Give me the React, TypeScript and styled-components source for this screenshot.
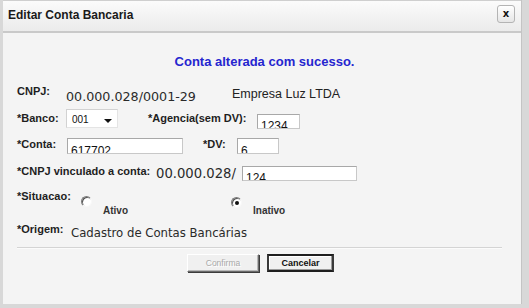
import React from "react";
import styled, { createGlobalStyle } from "styled-components";

const GlobalStyle = createGlobalStyle`
  html, body { margin: 0; padding: 0; }
  body { background: #d8d8d8; width: 529px; height: 308px; overflow: hidden; }
`;

const Dialog = styled.div`
  margin-left: 3px;
  width: 518px;
  height: 304px;
  background: #f4f4f4;
  border-right: 1px solid #c4c4c4;
  display: flex;
  flex-direction: column;
`;

const TitleBar = styled.div`
  height: 30px;
  border-top: 1px solid #cfcfcf;
  border-bottom: 2px solid #c9c9c9;
  background: linear-gradient(#fbfbfb, #ebebeb);
  display: flex;
  justify-content: space-between;
  align-items: flex-start;
  padding: 0 6px 0 5px;
`;

const Title = styled.span`
  margin-top: 7px;
  font: bold 12px/14px "Liberation Sans", Arial, sans-serif;
  color: #1a1a1a;
`;

const CloseButton = styled.button`
  margin-top: 4px;
  width: 18px;
  height: 18px;
  padding: 0;
  border: 1px solid #b4b4b4;
  border-radius: 3px;
  background: linear-gradient(#ffffff, #e6e6e6);
  font: bold 10px/14px "DejaVu Sans", sans-serif;
  color: #111;
  display: flex;
  align-items: center;
  justify-content: center;
`;

const Body = styled.div`
  padding-left: 14px;
  display: flex;
  flex-direction: column;
`;

const Message = styled.div`
  margin-top: 21px;
  width: 485px;
  text-align: center;
  padding-left: 10px;
  box-sizing: border-box;
  font: bold 13px/16px "Liberation Sans", Arial, sans-serif;
  color: #2525cf;
`;

const Row = styled.div<{ $h: number; $mt?: number }>`
  display: flex;
  align-items: flex-start;
  height: ${(p) => p.$h}px;
  margin-top: ${(p) => p.$mt ?? 0}px;
`;

const Label = styled.span<{ $w: number; $top?: number; $ml?: number }>`
  flex: none;
  width: ${(p) => p.$w}px;
  margin-top: ${(p) => p.$top ?? 0}px;
  margin-left: ${(p) => p.$ml ?? 0}px;
  font: bold 11px/13px "Liberation Sans", Arial, sans-serif;
  color: #1e1e1e;
  white-space: nowrap;
`;

const Value = styled.span<{ $w?: number; $top?: number; $size?: number }>`
  flex: none;
  ${(p) => (p.$w ? `width: ${p.$w}px;` : "")}
  margin-top: ${(p) => p.$top ?? 0}px;
  font-family: "DejaVu Sans", Verdana, sans-serif;
  font-size: ${(p) => p.$size ?? 13.2}px;
  line-height: 16px;
  color: #2a2a2a;
  white-space: nowrap;
`;

const PlainValue = styled.span<{ $top?: number }>`
  margin-top: ${(p) => p.$top ?? 0}px;
  font: 12.5px/15px "Liberation Sans", Arial, sans-serif;
  color: #222;
  white-space: nowrap;
`;

const Select = styled.div`
  flex: none;
  width: 52px;
  height: 19px;
  box-sizing: border-box;
  background: #fff;
  border: 1px solid #d2d2d2;
  border-right-color: #e4e4e4;
  border-bottom-color: #e4e4e4;
  display: flex;
  align-items: center;
  justify-content: space-between;
  padding: 3px 5px 0 5px;
  font: 10px/12px "Liberation Sans", Arial, sans-serif;
  color: #111;
`;

const Arrow = styled.span`
  width: 0;
  height: 0;
  border-left: 4px solid transparent;
  border-right: 4px solid transparent;
  border-top: 4px solid #111;
  margin-top: 2px;
`;

const TextBox = styled.div<{ $w: number; $h: number; $top?: number; $pt: number; $ml?: number }>`
  flex: none;
  width: ${(p) => p.$w}px;
  height: ${(p) => p.$h}px;
  margin-top: ${(p) => p.$top ?? 0}px;
  margin-left: ${(p) => p.$ml ?? 0}px;
  box-sizing: border-box;
  overflow: hidden;
  background: #fff;
  border: 1px solid #a8a8a8;
  border-right-color: #c8c8c8;
  border-bottom-color: #c8c8c8;
  padding: ${(p) => p.$pt}px 0 0 3px;
  font: 12px/14px "Liberation Sans", Arial, sans-serif;
  color: #111;
`;

const Option = styled.label<{ $w?: number }>`
  flex: none;
  ${(p) => (p.$w ? `width: ${p.$w}px;` : "")}
  display: flex;
  align-items: flex-start;
  gap: 11px;
`;

const Radio = styled.span<{ $checked?: boolean; $top: number }>`
  position: relative;
  flex: none;
  width: 11px;
  height: 11px;
  margin-top: ${(p) => p.$top}px;
  box-sizing: border-box;
  border-radius: 50%;
  border: 1px solid;
  border-color: #7a7a7a #f8f8f8 #f8f8f8 #7a7a7a;
  background: #fff;
  box-shadow: inset 1px 1px 0 #555;
  &::after {
    content: "";
    display: ${(p) => (p.$checked ? "block" : "none")};
    position: absolute;
    left: 3px;
    top: 3px;
    width: 4px;
    height: 4px;
    border-radius: 50%;
    background: #111;
  }
`;

const OptionText = styled.span<{ $top: number }>`
  margin-top: ${(p) => p.$top}px;
  font: bold 10px/12px "Liberation Sans", Arial, sans-serif;
  color: #333;
`;

const Separator = styled.div`
  margin-top: 1px;
  width: 485px;
  height: 1px;
  background: #d4d4d4;
  border-bottom: 1px solid #fbfbfb;
`;

const ButtonRow = styled.div`
  margin-top: 5px;
  width: 485px;
  display: flex;
  justify-content: center;
  gap: 8px;
  padding-left: 2px;
  box-sizing: border-box;
`;

const Button = styled.button<{ $w: number; $primary?: boolean }>`
  width: ${(p) => p.$w}px;
  height: 18px;
  padding: 0;
  box-sizing: border-box;
  background: #f0f0f0;
  border: ${(p) => (p.$primary ? "2px solid #1e1e1e" : "1px solid")};
  border-color: ${(p) => (p.$primary ? "#1e1e1e #3a3a3a #1e1e1e #3a3a3a" : "#ffffff #6a6a6a #6a6a6a #ffffff")};
  box-shadow: ${(p) => (p.$primary ? "inset -1px -1px 0 #9a9a9a, inset 1px 1px 0 #fff" : "1px 1px 0 #3c3c3c, inset -1px -1px 0 #b8b8b8")};
  font-family: "Liberation Sans", Arial, sans-serif;
  font-size: ${(p) => (p.$primary ? 9 : 8.5)}px;
  font-weight: ${(p) => (p.$primary ? "bold" : "normal")};
  color: ${(p) => (p.$primary ? "#111" : "#a8a8a8")};
  text-shadow: ${(p) => (p.$primary ? "none" : "1px 1px 0 #fff")};
`;

export default function App() {
  return (
    <>
      <GlobalStyle />
      <Dialog>
        <TitleBar>
          <Title>Editar Conta Bancaria</Title>
          <CloseButton aria-label="Fechar">x</CloseButton>
        </TitleBar>
        <Body>
          <Message>Conta alterada com sucesso.</Message>

          <Row $h={25} $mt={14}>
            <Label $w={49} $top={1}>CNPJ:</Label>
            <Value $w={166} $top={5} $size={12.7}>00.000.028/0001-29</Value>
            <PlainValue $top={3}>Empresa Luz LTDA</PlainValue>
          </Row>

          <Row $h={28}>
            <Label $w={49} $top={3}>*Banco:</Label>
            <Select>
              001
              <Arrow />
            </Select>
            <Label $w={109} $ml={30} $top={3}>*Agencia(sem DV):</Label>
            <TextBox $w={43} $h={15} $top={5} $pt={4}>1234</TextBox>
          </Row>

          <Row $h={28}>
            <Label $w={50} $top={1}>*Conta:</Label>
            <TextBox $w={116} $h={16} $top={1} $pt={5}>617702</TextBox>
            <Label $w={34} $ml={20} $top={1}>*DV:</Label>
            <TextBox $w={42} $h={16} $top={1} $pt={5}>6</TextBox>
          </Row>

          <Row $h={25}>
            <Label $w={139}>*CNPJ vinculado a conta:</Label>
            <Value $w={86} $top={1}>00.000.028/</Value>
            <TextBox $w={115} $h={15} $top={1} $pt={4}>124</TextBox>
          </Row>

          <Row $h={32}>
            <Label $w={64}>*Situacao:</Label>
            <Option $w={150}>
              <Radio $top={6} />
              <OptionText $top={15}>Ativo</OptionText>
            </Option>
            <Option>
              <Radio $top={7} $checked />
              <OptionText $top={15}>Inativo</OptionText>
            </Option>
          </Row>

          <Row $h={24}>
            <Label $w={54} $top={1}>*Origem:</Label>
            <Value $top={2.5} $size={11.7}>Cadastro de Contas Bancárias</Value>
          </Row>

          <Separator />

          <ButtonRow>
            <Button $w={72} disabled>Confirma</Button>
            <Button $w={67} $primary>Cancelar</Button>
          </ButtonRow>
        </Body>
      </Dialog>
    </>
  );
}
